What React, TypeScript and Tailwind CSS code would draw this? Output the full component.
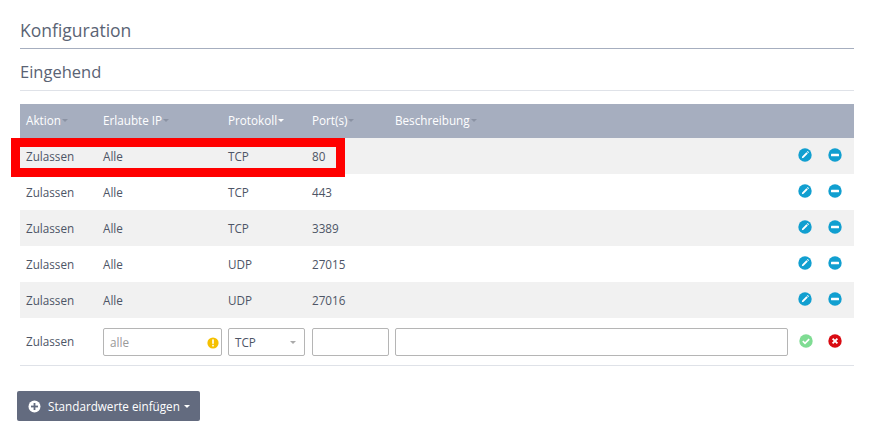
import React from "react";

const COLS = "grid grid-cols-[77px_125px_84px_83px_399px_1fr] items-center";

function Caret({ className }: { className: string }) {
  return <span className={`inline-block w-0 h-0 border-x-[3.5px] border-x-transparent border-t-[3.5px] ${className}`} />;
}

function Edit() {
  return (
    <svg width="14" height="14" viewBox="0 0 14 14" className="block">
      <circle cx="7" cy="7" r="6.7" fill="#119fd0" />
      <path d="M3.8 10.2l.4-1.8 4.2-4.2 1.4 1.4-4.2 4.2zM8.9 3.7l.4-.4a.5.5 0 0 1 .7 0l.7.7a.5.5 0 0 1 0 .7l-.4.4z" fill="#fff" />
    </svg>
  );
}

function Minus() {
  return (
    <svg width="14" height="14" viewBox="0 0 14 14" className="block">
      <circle cx="7" cy="7" r="6.7" fill="#119fd0" />
      <rect x="3" y="5.8" width="8" height="2.4" rx=".5" fill="#fff" />
    </svg>
  );
}

const rows = [
  ["TCP", "80"],
  ["TCP", "443"],
  ["TCP", "3389"],
  ["UDP", "27015"],
  ["UDP", "27016"],
];

const heads: [string, boolean][] = [
  ["Aktion", false],
  ["Erlaubte IP", false],
  ["Protokoll", true],
  ["Port(s)", false],
  ["Beschreibung", false],
];

export default function App() {
  return (
    <div className="relative w-[877px] h-[436px] bg-white overflow-hidden font-['Open_Sans',sans-serif] text-[11.7px] text-[#4d5566]">
      <div className="px-5 pt-[18px] w-[874px]">
        <h2 className="text-[17.5px] leading-[25px] h-[30px] text-[#5a6374] border-b border-[#a6aebf] box-content">Konfiguration</h2>
        <h3 className="mt-[12px] text-[16.5px] leading-[22px] h-[29px] text-[#5a6374] border-b border-[#dfe2e8] box-content">Eingehend</h3>
        <div className={`${COLS} mt-[13px] h-[34px] bg-[#a6aebf] text-white`}>
          {heads.map(([h, on]) => (
            <div key={h} className="pl-1.5 flex items-center gap-px">
              <span>{h}</span>
              <Caret className={on ? "border-t-white" : "border-t-[#8a92a3]"} />
            </div>
          ))}
          <div />
        </div>
        {rows.map(([p, port], i) => (
          <div key={port} className={`${COLS} h-9 ${i % 2 === 0 ? "bg-[#f1f1f1]" : "bg-white"}`}>
            <div className="pl-1.5 pt-0.5">Zulassen</div>
            <div className="pl-1.5 pt-0.5">Alle</div>
            <div className="pl-1.5 pt-0.5">{p}</div>
            <div className="pl-1.5 pt-0.5">{port}</div>
            <div />
            <div className="flex items-center pl-[10px] gap-4 mb-[3px]">
              <Edit />
              <span className="mt-px"><Minus /></span>
            </div>
          </div>
        ))}
        <div className={`${COLS} h-[48px] border-b border-[#dfe2e8]`}>
          <div className="pl-1.5 pt-px">Zulassen</div>
          <div className="pl-1.5">
            <div className="relative h-7 border border-[#b5b5b5] rounded-[2px] flex items-center pt-0.5 pl-1.5 text-[#999]">
              alle
              <svg width="12" height="12" viewBox="0 0 12 12" className="absolute right-[2px] top-[8px]">
                <circle cx="6" cy="6" r="5.6" fill="#f5c000" />
                <rect x="5.2" y="2.4" width="1.6" height="4.4" fill="#fff" />
                <rect x="5.2" y="7.8" width="1.6" height="1.6" fill="#fff" />
              </svg>
            </div>
          </div>
          <div className="pl-1.5 pr-px">
            <div className="h-7 border border-[#b5b5b5] rounded-[2px] flex items-center justify-between pt-0.5 pl-1.5 pr-2">
              TCP
              <Caret className="border-t-[#aaa]" />
            </div>
          </div>
          <div className="pl-1.5">
            <div className="h-7 border border-[#b5b5b5] rounded-[2px]" />
          </div>
          <div className="pl-1.5">
            <div className="h-7 border border-[#b5b5b5] rounded-[2px]" />
          </div>
          <div className="flex items-center pl-[11px] gap-[15px] mb-0.5">
            <svg width="14" height="14" viewBox="0 0 14 14" className="block">
              <circle cx="7" cy="7" r="6.7" fill="#7fdc93" />
              <path d="M3.8 7.2l2.2 2.1 4.2-4.2" fill="none" stroke="#fff" strokeWidth="1.7" />
            </svg>
            <svg width="14" height="14" viewBox="0 0 14 14" className="block">
              <circle cx="7" cy="7" r="6.7" fill="#d90b12" />
              <path d="M4.6 4.6l4.8 4.8M9.4 4.6l-4.8 4.8" fill="none" stroke="#fff" strokeWidth="1.9" />
            </svg>
          </div>
        </div>
        <button className="-ml-[3px] mt-[25px] h-[30px] w-[183px] bg-[#636b7f] rounded-[2px] text-white flex items-center pl-[11px] pt-px">
          <svg width="13" height="13" viewBox="0 0 13 13" className="block mr-[7px]">
            <circle cx="6.5" cy="6.5" r="6" fill="#fff" />
            <rect x="3" y="5.6" width="7" height="1.8" fill="#636b7f" />
            <rect x="5.6" y="3" width="1.8" height="7" fill="#636b7f" />
          </svg>
          <span>Standardwerte einfügen</span>
          <Caret className="border-t-white ml-1" />
        </button>
      </div>
      <div className="absolute left-[11px] top-[138px] w-[334px] h-[39px] border-[9px] border-[#ff0000]" />
    </div>
  );
}
